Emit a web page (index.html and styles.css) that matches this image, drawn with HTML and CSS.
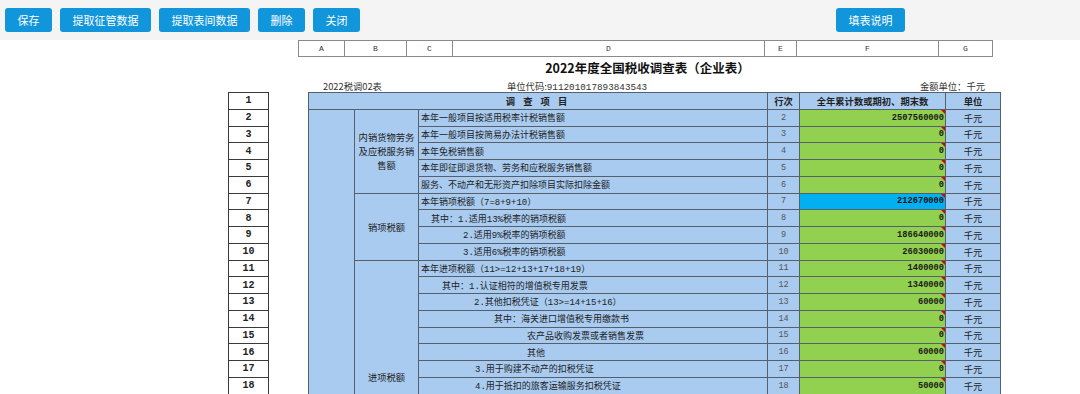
FILE: index.html
```html
<!DOCTYPE html>
<html lang="zh-CN">
<head>
  <meta charset="UTF-8" />
  <title>2022年度全国税收调查表（企业表）</title>
  <link rel="stylesheet" href="styles.css">
</head>
<body>
  <div class="toolbar">
    <button class="btn">保存</button>
    <button class="btn">提取征管数据</button>
    <button class="btn">提取表间数据</button>
    <button class="btn">删除</button>
    <button class="btn">关闭</button>
    <button class="btn btn-help">填表说明</button>
  </div>

  <!-- lettres de colonnes -->
  <table class="letters">
    <tr>
      <td class="la">A</td><td class="lb">B</td><td class="lc">C</td><td class="ld">D</td>
      <td class="le">E</td><td class="lf">F</td><td class="lg">G</td>
    </tr>
  </table>

  <h1 class="title">2022年度全国税收调查表（企业表）</h1>
  <div class="meta">
    <span class="meta-no">2022税调02表</span>
    <span class="meta-code">单位代码:<span class="mono">911201017893843543</span></span>
    <span class="meta-unit">金额单位：千元</span>
  </div>

  <div class="sheet">
    <table class="rownums">
      <tr><td>1</td></tr><tr><td>2</td></tr><tr><td>3</td></tr><tr><td>4</td></tr>
      <tr><td>5</td></tr><tr><td>6</td></tr><tr><td>7</td></tr><tr><td>8</td></tr>
      <tr><td>9</td></tr><tr><td>10</td></tr><tr><td>11</td></tr><tr><td>12</td></tr>
      <tr><td>13</td></tr><tr><td>14</td></tr><tr><td>15</td></tr><tr><td>16</td></tr>
      <tr><td>17</td></tr><tr><td>18</td></tr>
    </table>

    <table class="survey">
      <colgroup>
        <col class="c-blank"><col class="c-cat"><col class="c-desc">
        <col class="c-line"><col class="c-val"><col class="c-unit">
      </colgroup>
      <tr class="head">
        <td colspan="3" class="spaced">调 查 项 目</td>
        <td>行次</td>
        <td>全年累计数或期初、期末数</td>
        <td>单位</td>
      </tr>

      <tr>
        <td rowspan="23"></td>
        <td rowspan="5" class="cat">内销货物劳务及应税服务销售额</td>
        <td class="desc">本年一般项目按适用税率计税销售额</td>
        <td class="line">2</td><td class="val">2507560000</td><td class="unit">千元</td>
      </tr>
      <tr>
        <td class="desc">本年一般项目按简易办法计税销售额</td>
        <td class="line">3</td><td class="val">0</td><td class="unit">千元</td>
      </tr>
      <tr>
        <td class="desc">本年免税销售额</td>
        <td class="line">4</td><td class="val">0</td><td class="unit">千元</td>
      </tr>
      <tr>
        <td class="desc">本年即征即退货物、劳务和应税服务销售额</td>
        <td class="line">5</td><td class="val">0</td><td class="unit">千元</td>
      </tr>
      <tr>
        <td class="desc">服务、不动产和无形资产扣除项目实际扣除金额</td>
        <td class="line">6</td><td class="val">0</td><td class="unit">千元</td>
      </tr>

      <tr>
        <td rowspan="4" class="cat">销项税额</td>
        <td class="desc">本年销项税额（7=8+9+10）</td>
        <td class="line">7</td><td class="val total">212670000</td><td class="unit">千元</td>
      </tr>
      <tr>
        <td class="desc ind-10">其中：1.适用13%税率的销项税额</td>
        <td class="line">8</td><td class="val">0</td><td class="unit">千元</td>
      </tr>
      <tr>
        <td class="desc ind-42">2.适用9%税率的销项税额</td>
        <td class="line">9</td><td class="val">186640000</td><td class="unit">千元</td>
      </tr>
      <tr>
        <td class="desc ind-42">3.适用6%税率的销项税额</td>
        <td class="line">10</td><td class="val">26030000</td><td class="unit">千元</td>
      </tr>

      <tr>
        <td rowspan="14" class="cat">进项税额</td>
        <td class="desc">本年进项税额（11&gt;=12+13+17+18+19）</td>
        <td class="line">11</td><td class="val">1400000</td><td class="unit">千元</td>
      </tr>
      <tr>
        <td class="desc ind-21">其中：1.认证相符的增值税专用发票</td>
        <td class="line">12</td><td class="val">1340000</td><td class="unit">千元</td>
      </tr>
      <tr>
        <td class="desc ind-53">2.其他扣税凭证（13&gt;=14+15+16）</td>
        <td class="line">13</td><td class="val">60000</td><td class="unit">千元</td>
      </tr>
      <tr>
        <td class="desc ind-73">其中：海关进口增值税专用缴款书</td>
        <td class="line">14</td><td class="val">0</td><td class="unit">千元</td>
      </tr>
      <tr>
        <td class="desc ind-106">农产品收购发票或者销售发票</td>
        <td class="line">15</td><td class="val">0</td><td class="unit">千元</td>
      </tr>
      <tr>
        <td class="desc ind-106">其他</td>
        <td class="line">16</td><td class="val">60000</td><td class="unit">千元</td>
      </tr>
      <tr>
        <td class="desc ind-54">3.用于购建不动产的扣税凭证</td>
        <td class="line">17</td><td class="val">0</td><td class="unit">千元</td>
      </tr>
      <tr>
        <td class="desc ind-54">4.用于抵扣的旅客运输服务扣税凭证</td>
        <td class="line">18</td><td class="val">50000</td><td class="unit">千元</td>
      </tr>
      <!-- lignes suivantes hors cadre -->
      <tr class="rest"><td></td><td></td><td></td><td></td></tr>
      <tr class="rest"><td></td><td></td><td></td><td></td></tr>
      <tr class="rest"><td></td><td></td><td></td><td></td></tr>
      <tr class="rest"><td></td><td></td><td></td><td></td></tr>
      <tr class="rest"><td></td><td></td><td></td><td></td></tr>
      <tr class="rest"><td></td><td></td><td></td><td></td></tr>
    </table>
  </div>
</body>
</html>
```

FILE: styles.css
```css
html, body {
  height: 394px;
  overflow: hidden;
}

body {
  margin: 0;
  background: #fff;
  font-family: "Noto Sans CJK SC", "Noto Sans", sans-serif;
  color: #222;
}

.mono {
  font-family: "Liberation Mono", "Noto Sans CJK SC", monospace;
}

/* Barre d'outils */
.toolbar {
  height: 40px;
  background: #f4f4f4;
  display: flex;
  align-items: center;
  gap: 8px;
  padding-left: 5px;
}

.btn {
  height: 24px;
  padding: 0 12.5px;
  border: none;
  border-radius: 3px;
  background: #1296db;
  color: #fff;
  font-family: "Noto Sans CJK SC", sans-serif;
  font-size: 11px;
  line-height: 24px;
  cursor: pointer;
}

.btn-help {
  margin-left: 468px;
}

/* Lettres de colonnes */
.letters {
  margin-left: 298px;
  width: 687px;
  border-collapse: collapse;
  table-layout: fixed;
}

.letters td {
  height: 15px;
  padding: 0;
  border: 1px solid #8a8a8a;
  text-align: center;
  font-family: "Liberation Mono", monospace;
  font-size: 8px;
  color: #333;
}

.la { width: 45px; }
.lb { width: 61px; }
.lc { width: 45px; }
.ld { width: 311px; }
.le { width: 31px; }
.lf { width: 141px; }
.lg { width: 53px; }

.title {
  margin: 0 0 0 298px;
  width: 687px;
  padding-left: 12px;
  box-sizing: border-box;
  height: 22px;
  line-height: 22px;
  text-align: center;
  font-size: 12.5px;
  font-weight: bold;
  color: #111;
}

.meta {
  margin-left: 323px;
  width: 662px;
  height: 13px;
  display: flex;
  align-items: center;
  font-size: 9.3px;
  color: #333;
}

.meta-no {
  width: 184px;
}

.meta-unit {
  margin-left: auto;
}

/* Feuille */
.sheet {
  display: flex;
  align-items: flex-start;
  gap: 39px;
  margin-left: 228px;
}

.rownums {
  width: 41px;
  border-collapse: collapse;
}

.rownums tr {
  height: 16.75px;
}

.rownums td {
  padding: 0;
  border: 1px solid #3a3a3a;
  background: #fff;
  text-align: center;
  font-family: "Liberation Mono", monospace;
  font-weight: bold;
  font-size: 10px;
  color: #222;
}

.survey {
  width: 692px;
  border-collapse: collapse;
  table-layout: fixed;
  background: #a9cbf0;
  font-size: 9.3px;
}

.c-blank { width: 46px; }
.c-cat { width: 64px; }
.c-desc { width: 349px; }
.c-line { width: 32px; }
.c-val { width: 146px; }
.c-unit { width: 55px; }

.survey tr {
  height: 16.75px;
}

.survey td {
  padding: 0;
  border: 1px solid #56606c;
  white-space: nowrap;
  overflow: hidden;
}

.survey .rest td:nth-child(3) {
  background: #92d050;
}

.survey .head td {
  text-align: center;
  font-weight: bold;
  color: #222;
}

.survey .head .spaced {
  letter-spacing: 3px;
}

.cat {
  white-space: normal !important;
  text-align: center;
  line-height: 14px;
  padding: 0 2px !important;
  color: #222;
}

.desc {
  padding-left: 2px !important;
  font-family: "Liberation Mono", "Noto Sans CJK SC", monospace;
  font-size: 9px;
  color: #222;
}

.ind-10 { padding-left: 12px !important; }
.ind-21 { padding-left: 23px !important; }
.ind-42 { padding-left: 44px !important; }
.ind-53 { padding-left: 55px !important; }
.ind-54 { padding-left: 56px !important; }
.ind-73 { padding-left: 75px !important; }
.ind-106 { padding-left: 108px !important; }

.line {
  text-align: center;
  font-family: "Liberation Mono", monospace;
  font-size: 8.5px;
  color: #555;
}

.val {
  position: relative;
  background: #92d050;
  text-align: right;
  padding-right: 1px !important;
  font-family: "Liberation Mono", monospace;
  font-weight: bold;
  font-size: 8.7px;
  color: #1a1a1a;
}

.val::after {
  content: "";
  position: absolute;
  top: 0;
  right: 0;
  border-top: 4px solid #e00000;
  border-left: 4px solid transparent;
}

.val.total {
  background: #00b0f0;
  color: #111;
}

.unit {
  text-align: center;
  color: #222;
}
```
